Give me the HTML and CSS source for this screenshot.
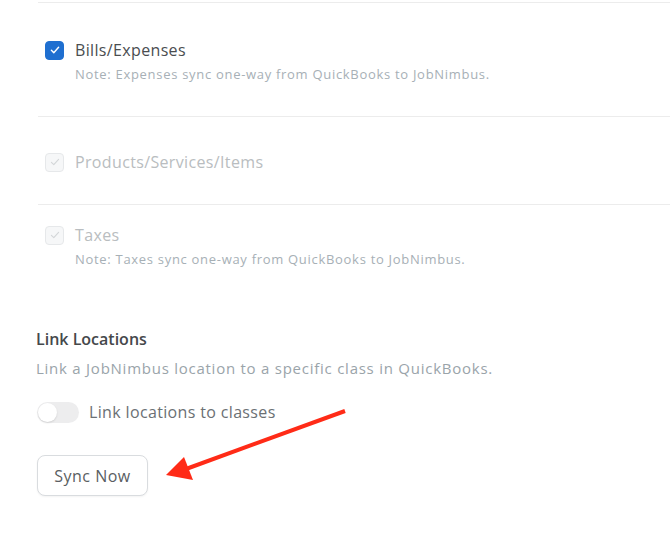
FILE: index.html
```html
<!DOCTYPE html>
<html lang="en">
<head>
    <meta charset="UTF-8">
    <meta name="viewport" content="width=device-width, initial-scale=1.0">
    <title>QuickBooks Sync Settings</title>
    <link rel="stylesheet" href="styles.css">
</head>
<body>
    <div class="settings">
        <div class="sync-list">
            <div class="sync-item first">
                <label class="check-row">
                    <span class="check checked">
                        <svg viewBox="0 0 20 20" width="12" height="12"><path d="M4 10.5l4 4 8-9" fill="none" stroke="#fff" stroke-width="2.4" stroke-linecap="round" stroke-linejoin="round"/></svg>
                    </span>
                    <span class="check-label">Bills/Expenses</span>
                </label>
                <p class="note">Note: Expenses sync one-way from QuickBooks to JobNimbus.</p>
            </div>

            <div class="sync-item">
                <label class="check-row disabled">
                    <span class="check">
                        <svg viewBox="0 0 20 20" width="12" height="12"><path d="M4 10.5l4 4 8-9" fill="none" stroke="#d3d6d8" stroke-width="1.8" stroke-linecap="round" stroke-linejoin="round"/></svg>
                    </span>
                    <span class="check-label">Products/Services/Items</span>
                </label>
            </div>

            <div class="sync-item last">
                <label class="check-row disabled">
                    <span class="check">
                        <svg viewBox="0 0 20 20" width="12" height="12"><path d="M4 10.5l4 4 8-9" fill="none" stroke="#d3d6d8" stroke-width="1.8" stroke-linecap="round" stroke-linejoin="round"/></svg>
                    </span>
                    <span class="check-label">Taxes</span>
                </label>
                <p class="note">Note: Taxes sync one-way from QuickBooks to JobNimbus.</p>
            </div>
        </div>

        <div class="locations">
            <h3>Link Locations</h3>
            <p class="desc">Link a JobNimbus location to a specific class in QuickBooks.</p>
            <label class="toggle-row">
                <span class="toggle"><span class="knob"></span></span>
                <span class="toggle-label">Link locations to classes</span>
            </label>
            <button type="button" class="btn">Sync Now</button>
        </div>
    </div>

    <!-- red pointer drawn on top of the page -->
    <svg class="pointer" width="670" height="542" viewBox="0 0 670 542">
        <line x1="345" y1="411" x2="186" y2="469" stroke="#ff2b17" stroke-width="4"/>
        <polygon points="166,475 184,457 193,480" fill="#ff2b17"/>
    </svg>
</body>
</html>
```

FILE: styles.css
```css
* {
    margin: 0;
    padding: 0;
    box-sizing: border-box;
}

body {
    background: #fff;
    font-family: 'Open Sans', 'Noto Sans', sans-serif;
    color: #4a4d50;
    position: relative;
    min-height: 542px;
    overflow: hidden;
}

.settings {
    padding-left: 36px;
}

.sync-list {
    margin-left: 2px;
    padding-top: 2px;
}

.sync-item {
    border-top: 1px solid #ececec;
    padding: 35px 7px 32px;
}

.sync-item.first {
    padding-top: 37px;
    padding-bottom: 34px;
}

.sync-item.last {
    padding-top: 20px;
    padding-bottom: 0;
}

.check-row {
    display: flex;
    align-items: center;
    gap: 11px;
    height: 20px;
}

.check {
    width: 19px;
    height: 19px;
    border-radius: 4px;
    border: 1px solid #e6e8ea;
    background: #f6f7f8;
    display: flex;
    align-items: center;
    justify-content: center;
}

.check.checked {
    background: #1f6fd0;
    border-color: #1f6fd0;
}

.check-label {
    font-size: 16px;
    line-height: 20px;
    letter-spacing: 0.35px;
    color: #4a4d50;
}

.disabled .check-label {
    color: #b9bdc0;
}

.note {
    font-size: 13px;
    line-height: 16px;
    letter-spacing: 0.7px;
    color: #a7b0b6;
    margin-top: 6px;
    margin-left: 30px;
}

.locations {
    margin-top: 62px;
}

.locations h3 {
    font-size: 16px;
    font-weight: 600;
    line-height: 20px;
    color: #45484b;
}

.desc {
    font-size: 15px;
    line-height: 16px;
    letter-spacing: 0.75px;
    color: #9aa4aa;
    margin-top: 11px;
}

.toggle-row {
    display: flex;
    align-items: center;
    gap: 10px;
    margin-top: 25px;
    margin-left: 1px;
}

.toggle {
    width: 42px;
    height: 21px;
    border-radius: 11px;
    background: #ededee;
    display: flex;
    align-items: center;
    padding-left: 1px;
}

.knob {
    width: 19px;
    height: 19px;
    border-radius: 50%;
    background: #fff;
    box-shadow: 0 1px 2px rgba(0, 0, 0, 0.12);
}

.toggle-label {
    font-size: 16px;
    letter-spacing: 0.35px;
    color: #6b7074;
}

.btn {
    margin-top: 32px;
    margin-left: 1px;
    width: 111px;
    height: 41px;
    border: 1px solid #d9dcdf;
    border-radius: 8px;
    background: #fff;
    font-family: inherit;
    font-size: 16px;
    letter-spacing: 0.5px;
    color: #5a5e62;
    box-shadow: 0 1px 2px rgba(0, 0, 0, 0.05);
}

.pointer {
    position: absolute;
    left: 0;
    top: 0;
    pointer-events: none;
}
```
